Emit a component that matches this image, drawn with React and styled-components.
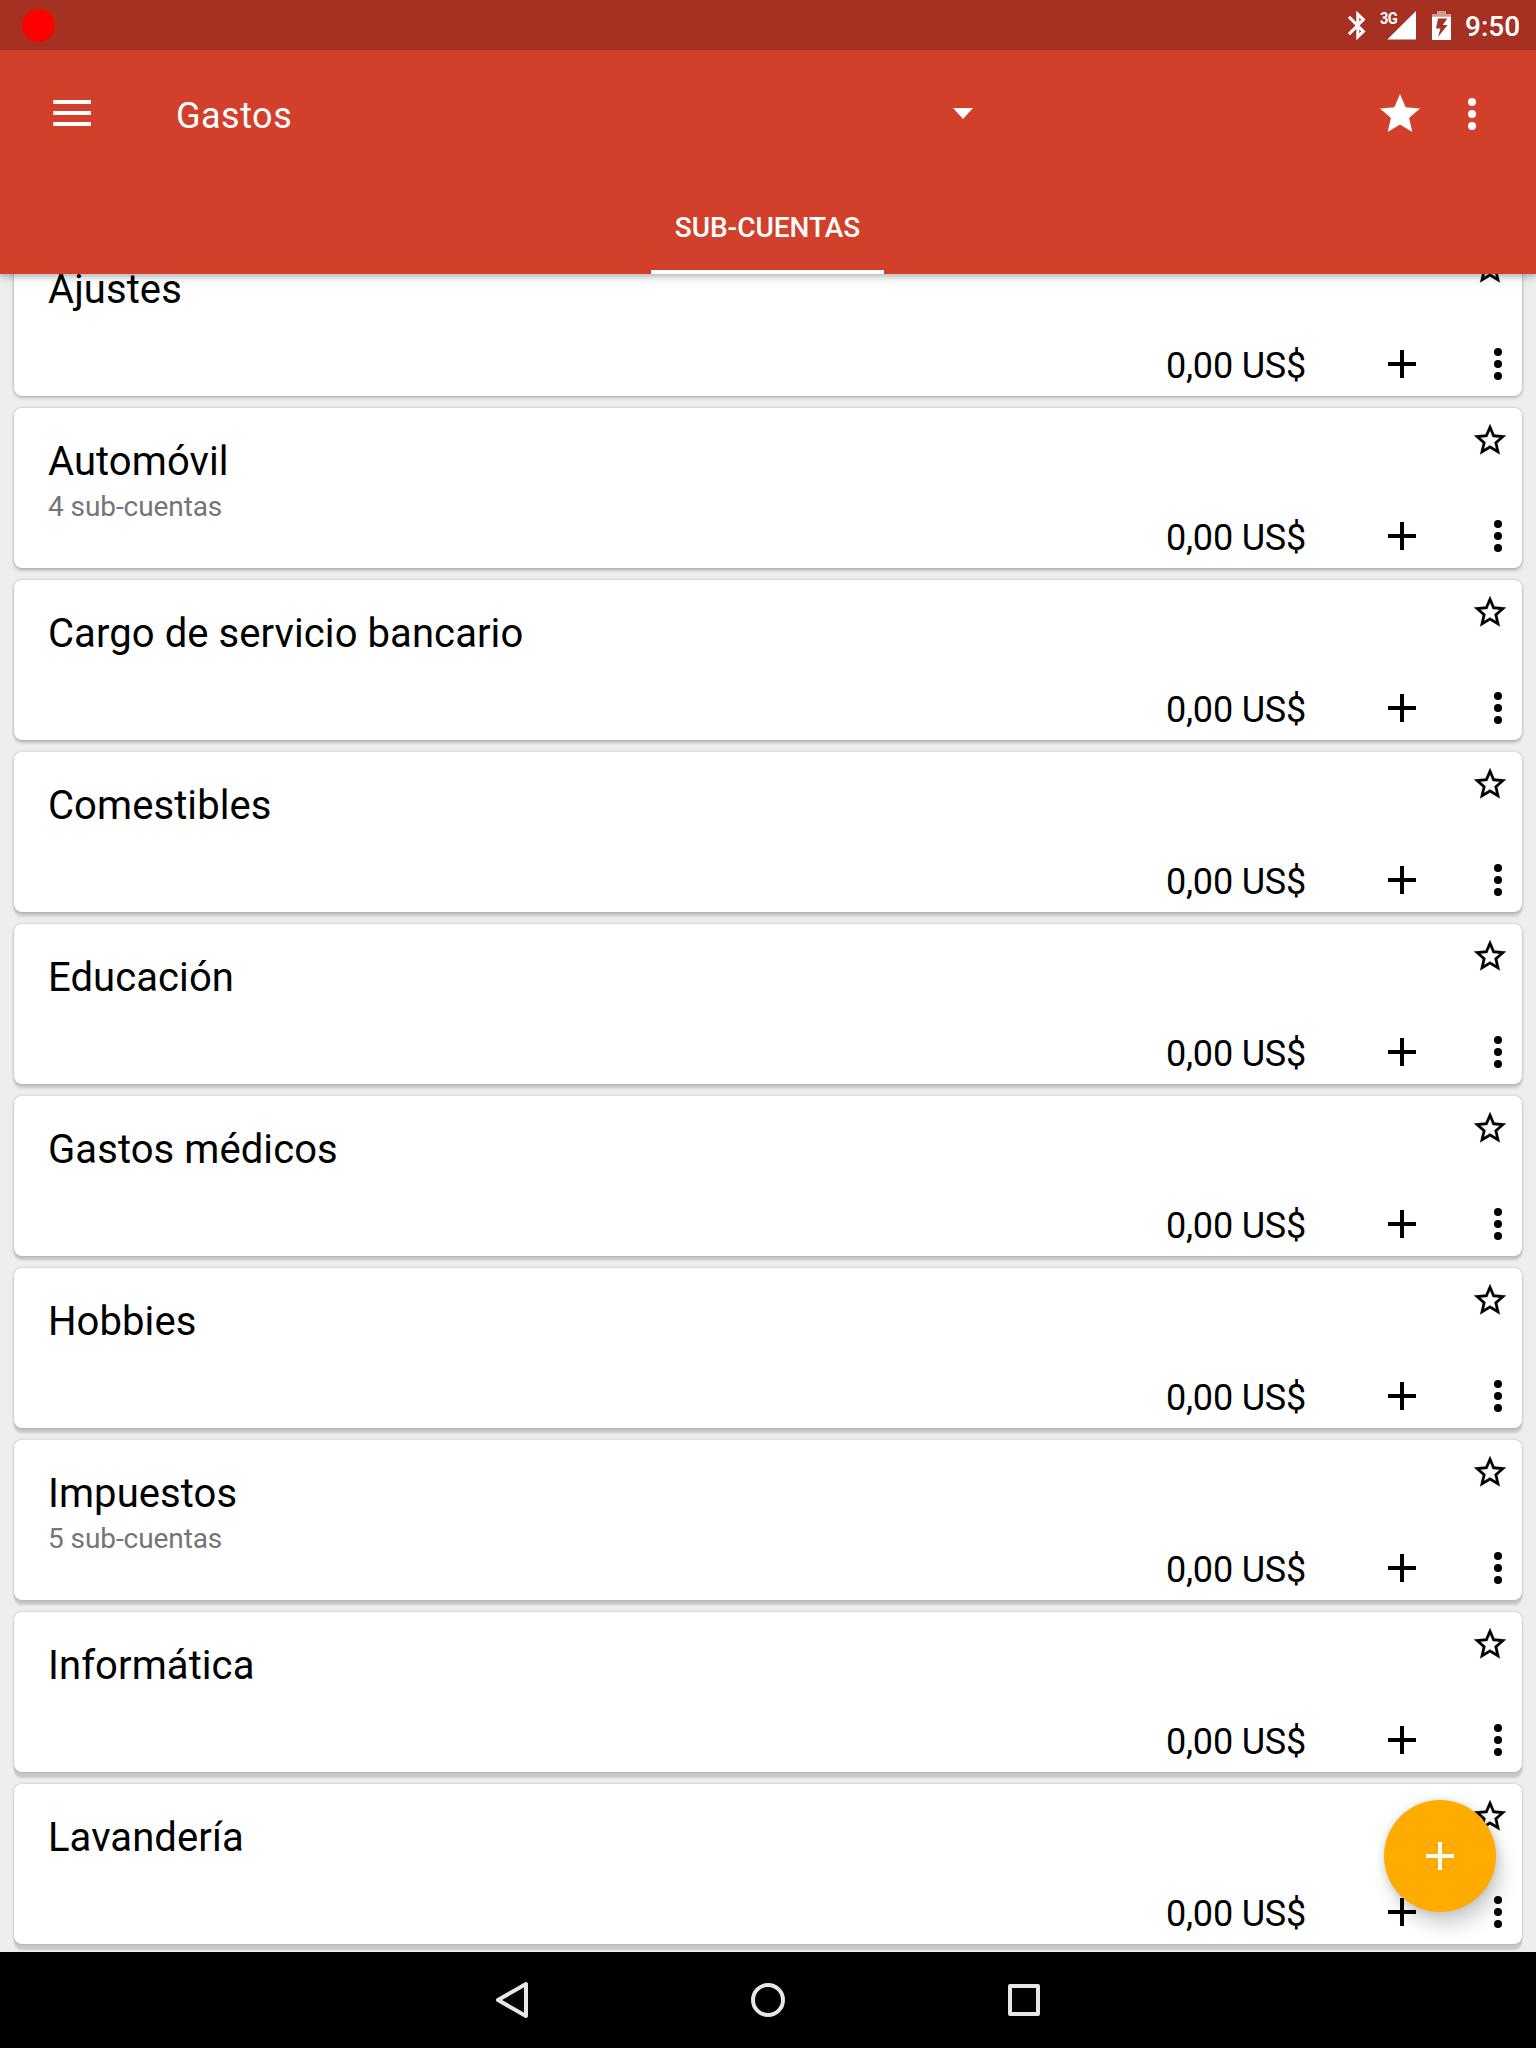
import React from 'react';
import styled, { createGlobalStyle } from 'styled-components';

const GlobalStyle = createGlobalStyle`
  * { box-sizing: border-box; }
  html, body { margin: 0; padding: 0; }
  body { background: #eeeeee; font-family: Roboto, "Noto Sans", sans-serif; color: #000; }
  svg { display: block; flex: none; }
`;

const Screen = styled.div`
  position: relative;
  width: 1536px;
  height: 2048px;
  overflow: hidden;
  display: flex;
  flex-direction: column;
  background: #eeeeee;
`;

const StatusBar = styled.header`
  flex: none;
  height: 50px;
  display: flex;
  align-items: center;
  padding: 0 16px 0 21.5px;
  background: #a63021;
  color: #fff;
  z-index: 2;
`;

const RecordDot = styled.span`
  width: 33px;
  height: 33px;
  border-radius: 50%;
  background: #ff0000;
  margin-right: auto;
`;

const Clock = styled.span`
  width: 55px;
  margin-left: 14px;
  font-size: 28px;
  font-weight: 500;
  line-height: 34px;
  white-space: nowrap;
  padding-top: 3px;
`;

const Signal = styled.span`
  position: relative;
  width: 36px;
  height: 30px;
  margin-left: 14px;
  display: flex;
  justify-content: flex-end;
`;

const NetworkLabel = styled.span`
  position: absolute;
  left: 0;
  top: -1px;
  font-size: 17px;
  line-height: 18px;
  font-weight: 700;
  letter-spacing: -0.6px;
  transform: scaleX(0.86);
  transform-origin: left;
`;

const Battery = styled.span`
  margin-left: 16px;
`;

const AppBar = styled.div`
  flex: none;
  height: 224px;
  display: flex;
  flex-direction: column;
  background: #d23f2b;
  color: #fff;
  box-shadow: 0 1px 10px rgba(0, 0, 0, 0.36), 0 2px 3px rgba(0, 0, 0, 0.05);
  z-index: 1;
`;

const Toolbar = styled.div`
  height: 128px;
  display: flex;
  align-items: center;
  padding: 0 40px 0 48px;
`;

const Spinner = styled.div`
  width: 797px;
  margin-left: 80px;
  display: flex;
  align-items: center;
  justify-content: space-between;
  font-size: 36px;
  line-height: 44px;
  letter-spacing: 0.5px;
`;

const SpinnerLabel = styled.span`
  padding-top: 3px;
`;

const Caret = styled.span`
  padding-bottom: 1px;
`;

const Actions = styled.div`
  margin-left: auto;
  display: flex;
  gap: 24px;
`;

const Tabs = styled.div`
  flex: 1;
  display: flex;
  justify-content: center;
  padding-right: 1px;
`;

const Tab = styled.div`
  width: 233px;
  padding-top: 6px;
  border-bottom: 4px solid #fff;
  display: flex;
  align-items: center;
  justify-content: center;
  font-size: 28px;
  font-weight: 500;
  white-space: nowrap;
`;

const List = styled.main`
  flex: 1;
  min-height: 0;
  overflow: hidden;
  padding: 0 14px;
`;

const Cards = styled.div`
  margin-top: -38px;
  display: flex;
  flex-direction: column;
  gap: 12px;
`;

const Card = styled.article`
  flex: none;
  height: 160px;
  display: flex;
  justify-content: space-between;
  padding: 0 0 8px 34px;
  border-radius: 8px;
  background: #fff;
  box-shadow: 0 0 3px rgba(0, 0, 0, 0.22),
    0 ${(p) => p.$depth}px ${(p) => 5 - p.$depth * 0.6}px rgba(0, 0, 0, ${(p) => 0.21 - p.$depth * 0.01});
`;

const Info = styled.div`
  padding-top: 30px;
`;

const Name = styled.div`
  font-size: 40px;
  line-height: 47px;
  letter-spacing: 0.08px;
  white-space: nowrap;
`;

const Detail = styled.div`
  margin-top: 5px;
  font-size: 28px;
  line-height: 33px;
  letter-spacing: -0.08px;
  color: #757575;
`;

const Side = styled.div`
  display: flex;
  flex-direction: column;
  justify-content: space-between;
  align-items: flex-end;
`;

const Favorite = styled.div`
  padding: 12px 12px 0 0;
`;

const Controls = styled.div`
  display: flex;
  align-items: center;
  height: 48px;
`;

const Balance = styled.span`
  margin-right: 72px;
  padding-top: 3px;
  font-size: 36px;
  line-height: 42px;
  letter-spacing: -0.2px;
  white-space: nowrap;
`;

const IconGap = styled.span`
  width: 48px;
`;

const Fab = styled.button`
  position: absolute;
  left: 1384px;
  top: 1800px;
  width: 112px;
  height: 112px;
  padding: 0;
  border: 0;
  border-radius: 50%;
  display: flex;
  align-items: center;
  justify-content: center;
  background: #ffab00;
  color: #fff;
  box-shadow: 0 0 10px rgba(0, 0, 0, 0.14), 6px 14px 18px rgba(0, 0, 0, 0.17);
  z-index: 1;
`;

const NavBar = styled.nav`
  flex: none;
  height: 96px;
  display: flex;
  align-items: center;
  justify-content: center;
  gap: 208px;
  background: #000;
  z-index: 1;
`;

const STAR = 'M22 9.24l-7.19-.62L12 2 9.19 8.63 2 9.24l5.46 4.73L5.82 21 12 17.27 18.18 21l-1.63-7.03L22 9.24z';

const StarIcon = () => (
  <svg width="48" height="48" viewBox="0 0 24 24" fill="currentColor">
    <path d={STAR} />
  </svg>
);

const StarOutlineIcon = () => (
  <svg width="40" height="40" viewBox="-0.5 -0.5 25 25" fill="currentColor" stroke="currentColor" strokeWidth="0.15">
    <path
      fillRule="evenodd"
      d={STAR + 'M12 15.4l-3.76 2.27 1-4.28-3.32-2.88 4.38-.38L12 6.1l1.71 4.04 4.38.38-3.32 2.88 1 4.28L12 15.4z'}
    />
  </svg>
);

const MoreIcon = () => (
  <svg width="48" height="48" viewBox="0 0 24 24" fill="currentColor">
    <circle cx="12" cy="6" r="2" />
    <circle cx="12" cy="12" r="2" />
    <circle cx="12" cy="18" r="2" />
  </svg>
);

const PlusIcon = () => (
  <svg width="48" height="48" viewBox="0 0 24 24" fill="currentColor">
    <path d="M19 13h-6v6h-2v-6H5v-2h6V5h2v6h6z" />
  </svg>
);

const MenuIcon = () => (
  <svg width="48" height="48" viewBox="0 0 48 48" fill="currentColor">
    <path d="M5.3 10H43v4H5.3zM5.3 21H43v4H5.3zM5.3 32H43v4H5.3z" />
  </svg>
);

const CaretIcon = () => (
  <svg width="20" height="11" viewBox="0 0 20 11" fill="currentColor">
    <path d="M0 0h20L10 11z" />
  </svg>
);

const BluetoothIcon = () => (
  <svg width="18" height="29" viewBox="0 0 18 29" fill="none" stroke="currentColor" strokeWidth="3">
    <path d="M1 5.8L15.4 20.4 9.8 25.8V3.2l5.6 5.4L1 23.2" />
  </svg>
);

const SignalIcon = () => (
  <svg width="29" height="30" viewBox="0 0 29 30" fill="currentColor">
    <path d="M29 1v28.5H.3z" />
  </svg>
);

const BatteryIcon = () => (
  <svg width="19" height="29" viewBox="0 0 19 29" fill="currentColor">
    <path opacity="0.5" d="M5 0h9v3h5v2.5H0V3h5z" />
    <path fillRule="evenodd" d="M0 5.5h19V29H0zM6 7.6L4 17.4h4.5L6 26l9.5-12h-4.8l4.6-6.4z" />
  </svg>
);

const accounts = [
  { name: 'Ajustes' },
  { name: 'Automóvil', detail: '4 sub-cuentas' },
  { name: 'Cargo de servicio bancario' },
  { name: 'Comestibles' },
  { name: 'Educación' },
  { name: 'Gastos médicos' },
  { name: 'Hobbies' },
  { name: 'Impuestos', detail: '5 sub-cuentas' },
  { name: 'Informática' },
  { name: 'Lavandería' },
];

function AccountCard({ name, detail, depth }) {
  return (
    <Card $depth={depth}>
      <Info>
        <Name>{name}</Name>
        {detail && <Detail>{detail}</Detail>}
      </Info>
      <Side>
        <Favorite><StarOutlineIcon /></Favorite>
        <Controls>
          <Balance>0,00 US$</Balance>
          <PlusIcon />
          <IconGap />
          <MoreIcon />
        </Controls>
      </Side>
    </Card>
  );
}

export default function App() {
  return (
    <Screen>
      <GlobalStyle />
      <StatusBar>
        <RecordDot />
        <BluetoothIcon />
        <Signal>
          <NetworkLabel>3G</NetworkLabel>
          <SignalIcon />
        </Signal>
        <Battery><BatteryIcon /></Battery>
        <Clock>9:50</Clock>
      </StatusBar>
      <AppBar>
        <Toolbar>
          <MenuIcon />
          <Spinner>
            <SpinnerLabel>Gastos</SpinnerLabel>
            <Caret><CaretIcon /></Caret>
          </Spinner>
          <Actions>
            <StarIcon />
            <MoreIcon />
          </Actions>
        </Toolbar>
        <Tabs>
          <Tab>SUB-CUENTAS</Tab>
        </Tabs>
      </AppBar>
      <List>
        <Cards>
          {accounts.map((account, i) => (
            <AccountCard key={account.name} {...account} depth={2 + i * 0.4} />
          ))}
        </Cards>
      </List>
      <Fab aria-label="+"><PlusIcon /></Fab>
      <NavBar>
        <svg width="48" height="48" viewBox="0 0 48 48" fill="none" stroke="#e6e6e6" strokeWidth="4" strokeLinejoin="round">
          <path d="M10 24L38 8v32z" />
        </svg>
        <svg width="48" height="48" viewBox="0 0 48 48" fill="none" stroke="#e6e6e6" strokeWidth="4">
          <circle cx="24" cy="24" r="15" />
        </svg>
        <svg width="48" height="48" viewBox="0 0 48 48" fill="none" stroke="#e6e6e6" strokeWidth="4" strokeLinejoin="round">
          <path d="M10 10h28v28H10z" />
        </svg>
      </NavBar>
    </Screen>
  );
}
